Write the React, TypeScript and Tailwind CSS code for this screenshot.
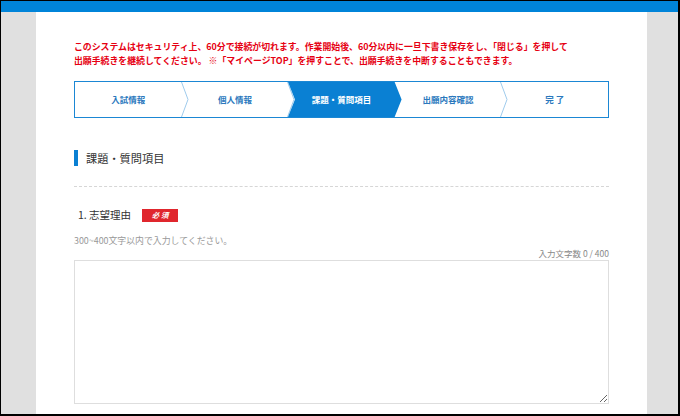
import React from 'react'

const steps = ['入試情報', '個人情報', '課題・質問項目', '出願内容確認', '完 了']
const ACTIVE = 2

export default function App() {
  return (
    <div
      className="w-[680px] h-[416px] flex flex-col overflow-hidden border-t border-l border-r-2 border-b-2 border-black bg-[#e0e0e0]"
      style={{ fontFamily: '"Noto Sans CJK JP", "Noto Sans", sans-serif' }}
    >
      {/* top bar */}
      <div className="h-[11px] shrink-0 bg-[#0084d9]" />

      <div className="flex flex-1 min-h-0">
        <div className="w-[35px] shrink-0" />

        <main className="w-[611px] shrink-0 bg-white px-[38px] pt-[28px]">
          {/* warning */}
          <p className="text-[8.9px] leading-[14px] font-bold text-[#e60012] whitespace-nowrap">
            このシステムはセキュリティ上、60分で接続が切れます。作業開始後、60分以内に一旦下書き保存をし、「閉じる」を押して
            <br />
            出願手続きを継続してください。 ※「マイページTOP」を押すことで、出願手続きを中断することもできます。
          </p>

          {/* steps */}
          <div className="mt-[13px] h-[37px] flex border border-[#1b87d4]">
            {steps.map((s, i) => (
              <div key={s} className="relative flex-1 flex items-center justify-center">
                {i === ACTIVE && (
                  <svg
                    className="absolute left-0 top-0 h-full w-[calc(100%+7px)] z-10"
                    viewBox="0 0 114 35"
                    preserveAspectRatio="none"
                  >
                    <polygon points="0,0 107,0 114,17.5 107,35 0,35 7,17.5" fill="#0a80d3" />
                  </svg>
                )}
                {i < steps.length - 1 && i !== ACTIVE && (
                  <svg
                    className="absolute left-[calc(100%-1px)] top-0 h-full w-[8px] z-0"
                    viewBox="0 0 8 35"
                    preserveAspectRatio="none"
                  >
                    <polyline points="0.5,0 7,17.5 0.5,35" fill="none" stroke="#9fcbec" strokeWidth="1" />
                  </svg>
                )}
                <span
                  className={`relative z-20 text-[8.5px] font-bold ${
                    i === ACTIVE ? 'text-white' : 'text-[#2a78bd]'
                  }`}
                >
                  {s}
                </span>
              </div>
            ))}
          </div>

          {/* section heading */}
          <div className="mt-[32px] flex items-center h-[16px]">
            <span className="w-[4px] h-[16px] bg-[#0a80d3]" />
            <h2 className="ml-[8px] text-[11.2px] leading-[16px] text-[#333]">課題・質問項目</h2>
          </div>

          <div className="mt-[20px] border-t border-dashed border-[#d6d6d6]" />

          {/* question */}
          <div className="mt-[20px] flex items-center h-[16px]">
            <span className="ml-[4px] text-[10.5px] leading-[16px] text-[#333]">1. 志望理由</span>
            <span className="ml-[11px] w-[36px] h-[13px] flex items-center justify-center bg-[#e0262d] text-white text-[7.5px] font-bold italic">
              必 須
            </span>
          </div>

          <p className="mt-[12px] text-[8.9px] leading-[12px] text-[#999]">300~400文字以内で入力してください。</p>
          <p className="text-right text-[8.5px] leading-[12px] text-[#888]">入力文字数 0 / 400</p>

          <textarea className="mt-[1px] block w-full h-[144px] border border-[#dedede] outline-none" />
        </main>

        <div className="flex-1" />
      </div>
    </div>
  )
}
